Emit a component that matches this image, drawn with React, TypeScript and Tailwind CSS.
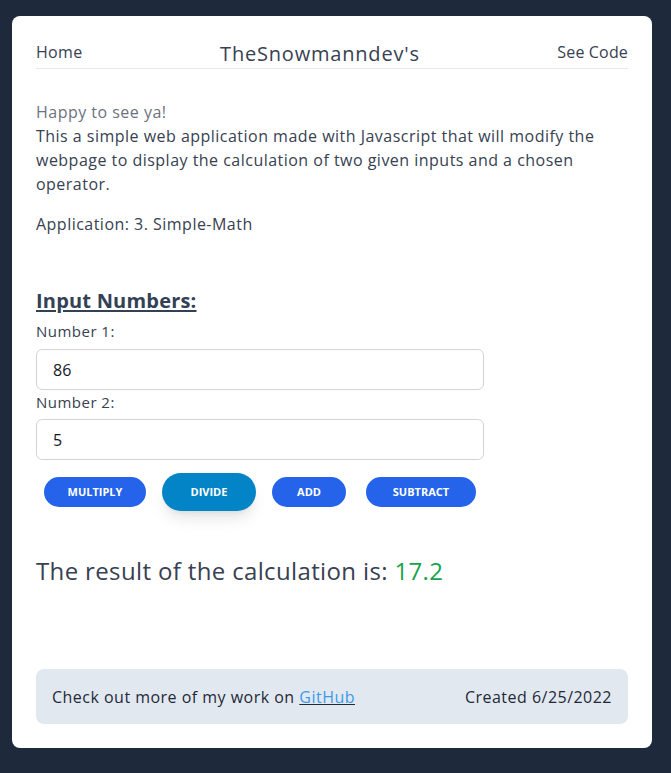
import React from "react";

export default function App() {
  return (
    <div className="min-h-[773px] w-full bg-[#1e293b] pl-3 pr-[19px] pt-4 pb-[25px] font-['Open_Sans',sans-serif]">
      <div className="flex min-h-[732px] flex-col rounded-lg bg-white px-6 pt-6 pb-6 text-[#374151] tracking-[0.03em]">
        <nav className="flex items-center justify-between border-b border-[#e5e7eb] pb-1">
          <span className="text-base leading-6 text-[#374151] tracking-[0.02em]">Home</span>
          <span className="translate-y-[2px] text-xl leading-6 tracking-[0.04em] text-[#374151]">TheSnowmanndev's</span>
          <span className="text-base leading-6 text-[#374151] tracking-[0.01em]">See Code</span>
        </nav>

        <div className="mt-[31px] text-base leading-6">
          <p className="text-[#6b7280]">Happy to see ya!</p>
          <p>
            This a simple web application made with Javascript that will modify the webpage to display the
            calculation of two given inputs and a chosen operator.
          </p>
          <p className="mt-4">Application: 3. Simple-Math</p>
        </div>

        <h2 className="mt-[51px] text-xl font-bold leading-7 tracking-[0.01em] text-[#334155] underline underline-offset-2">
          Input Numbers:
        </h2>
        <label className="mt-[4px] block text-[15px] leading-6">Number 1:</label>
        <div className="mt-[6px] flex h-[41px] w-[448px] items-center rounded-md border border-[#d1d5db] px-4 text-base tracking-normal text-[#111827]">
          86
        </div>
        <label className="block text-[15px] leading-6">Number 2:</label>
        <div className="mt-[5px] flex h-[41px] w-[448px] items-center rounded-md border border-[#d1d5db] px-4 text-base tracking-normal text-[#111827]">
          5
        </div>

        <div className="mt-[13px] flex items-center pl-2 tracking-normal">
          <button className="h-[30px] w-[102px] rounded-full bg-[#2563eb] text-[11px] font-bold text-white">MULTIPLY</button>
          <button className="ml-4 h-[38px] w-[94px] rounded-full bg-[#0284c7] text-[11px] font-bold text-white shadow-lg">DIVIDE</button>
          <button className="ml-4 h-[30px] w-[74px] rounded-full bg-[#2563eb] text-[11px] font-bold text-white">ADD</button>
          <button className="ml-5 h-[30px] w-[110px] rounded-full bg-[#2563eb] text-[11px] font-bold text-white">SUBTRACT</button>
        </div>

        <p className="mt-[44px] text-2xl leading-8 tracking-[0.015em] text-[#374151]">
          The result of the calculation is: <span className="text-[#16a34a]">17.2</span>
        </p>

        <div className="mt-auto flex h-[55px] items-center justify-between rounded-lg bg-[#e2e8f0] px-4 text-base tracking-[0.03em] text-[#1f2937]">
          <span>
            Check out more of my work on{" "}
            <a className="text-[#3b9be8] underline decoration-[#1f2937]">GitHub</a>
          </span>
          <span>Created 6/25/2022</span>
        </div>
      </div>
    </div>
  );
}
